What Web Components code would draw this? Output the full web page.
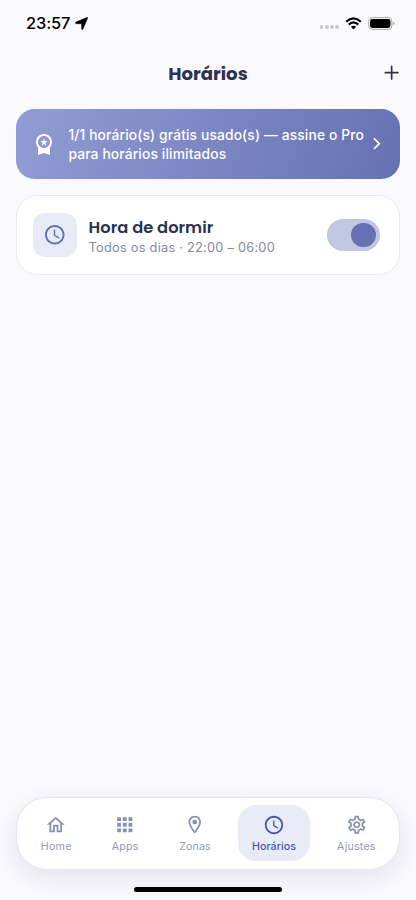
<!DOCTYPE html>
<html lang="pt-BR"><head><meta charset="utf-8"><title>Horários</title>
<style>
html,body{margin:0;height:100%}
body{background:#fafafd;font-family:Inter,"Liberation Sans",sans-serif;color:#2d3250;overflow:hidden}
</style></head><body>
<app-screen>
<status-bar></status-bar>
<title-bar>Horários</title-bar>
<promo-banner>1/1 horário(s) grátis usado(s) — assine o Pro<br>para horários ilimitados</promo-banner>
<schedule-card><span slot="name">Hora de dormir</span><span slot="time">Todos os dias · 22:00 – 06:00</span></schedule-card>
<nav-bar>
<nav-item icon="home" style="--w:58px;--ls:.2px">Home</nav-item>
<nav-item icon="apps" style="--w:54px;--ls:.15px">Apps</nav-item>
<nav-item icon="pin" style="--w:60px;--ls:.1px">Zonas</nav-item>
<nav-item icon="clock" active style="--w:72px;--ls:.02px">Horários</nav-item>
<nav-item icon="gear" style="--w:67px;--ls:.2px">Ajustes</nav-item>
</nav-bar>
<home-indicator></home-indicator>
</app-screen>
<script>
const ICONS={
home:'<path d="M12 5.69l5 4.5V18.500h-2v-6.500H9v6.500H7v-8.300l5-4.500M12 3L2 12h3v8.500h6v-6.500h2v6.500h6V12h3L12 3z"/>',
apps:'<path d="M3.500 3.500h4.300v4.300H3.500zM9.850 3.500h4.300v4.300h-4.300zM16.200 3.500h4.300v4.300h-4.300zM3.500 9.850h4.300v4.300H3.500zM9.850 9.850h4.300v4.300h-4.300zM16.200 9.850h4.300v4.300h-4.300zM3.500 16.200h4.300v4.300H3.500zM9.850 16.200h4.300v4.300H9.850zM16.200 16.200h4.300v4.300h-4.300z"/>',
pin:'<path d="M12 2C8.130 2 5 5.130 5 9c0 5.250 7 13 7 13s7-7.750 7-13c0-3.870-3.130-7-7-7zM7 9c0-2.760 2.240-5 5-5s5 2.240 5 5c0 2.880-2.880 7.190-5 9.880C9.920 16.210 7 11.850 7 9z"/><circle cx="12" cy="9" r="2.700"/>',
clock:'<path d="M11.990 2C6.470 2 2 6.480 2 12s4.470 10 9.990 10C17.520 22 22 17.520 22 12S17.520 2 11.990 2zM12 20c-4.420 0-8-3.580-8-8s3.580-8 8-8 8 3.580 8 8-3.580 8-8 8zm.5-13H11v6l5.250 3.150.75-1.230-4.500-2.670z"/>',
gear:'<path d="M19.43 12.98c.04-.32.07-.64.07-.98 0-.34-.03-.66-.07-.98l2.110-1.650c.19-.15.24-.42.12-.64l-2-3.460c-.09-.16-.26-.25-.44-.25-.06 0-.12.010-.17.030l-2.490 1c-.52-.4-1.080-.73-1.690-.98l-.38-2.650C14.460 2.180 14.250 2 14 2h-4c-.25 0-.46.18-.49.42l-.38 2.650c-.61.25-1.170.59-1.690.98l-2.490-1c-.06-.02-.12-.03-.18-.03-.17 0-.34.09-.43.25l-2 3.460c-.13.22-.07.49.12.64l2.110 1.650c-.04.32-.07.65-.07.98 0 .33.03.66.07.98l-2.110 1.650c-.19.15-.24.42-.12.64l2 3.460c.09.16.26.25.44.25.06 0 .12-.01.17-.03l2.490-1c.52.4 1.080.73 1.690.98l.38 2.650c.03.24.24.42.49.42h4c.25 0 .46-.18.49-.42l.38-2.650c.61-.25 1.170-.59 1.690-.98l2.490 1c.06.02.12.03.18.03.17 0 .34-.09.43-.25l2-3.460c.12-.22.07-.49-.12-.64l-2.110-1.650zm-1.980-1.710c.04.31.05.52.05.73 0 .21-.02.43-.05.73l-.14 1.130.89.7 1.080.84-.7 1.210-1.270-.51-1.040-.42-.9.68c-.43.32-.84.56-1.250.73l-1.060.43-.16 1.130-.2 1.350h-1.400l-.19-1.350-.16-1.130-1.060-.43c-.43-.18-.83-.41-1.230-.71l-.91-.7-1.060.43-1.270.51-.7-1.210 1.080-.84.89-.7-.14-1.130c-.03-.31-.05-.54-.05-.74s.02-.43.05-.73l.14-1.130-.89-.7-1.080-.84.7-1.210 1.270.51 1.040.42.9-.68c.43-.32.84-.56 1.250-.73l1.060-.43.16-1.130.2-1.350h1.390l.19 1.350.16 1.130 1.060.43c.43.18.83.41 1.230.71l.91.7 1.060-.43 1.270-.51.7 1.210-1.070.85-.89.7.14 1.130zM12 8c-2.210 0-4 1.790-4 4s1.790 4 4 4 4-1.790 4-4-1.790-4-4-4zm0 6c-1.100 0-2-.9-2-2s.9-2 2-2 2 .9 2 2-.9 2-2 2z"/>',
award:'<path d="M9.680 13.690L12 11.930l2.310 1.760-.88-2.850L15.750 9h-2.840L12 6.190 11.090 9H8.250l2.310 1.840-.88 2.850zM20 10c0-4.420-3.580-8-8-8s-8 3.580-8 8c0 2.030.76 3.870 2 5.280V23l6-2 6 2v-7.720c1.240-1.410 2-3.250 2-5.280zm-8-6c3.310 0 6 2.690 6 6s-2.690 6-6 6-6-2.690-6-6 2.690-6 6-6z"/>',
plus:'<path d="M12 4.900v14.200M4.900 12h14.200" fill="none" stroke="currentColor" stroke-width="1.900" stroke-linecap="round"/>',
chevron:'<path d="M9 6l6 6-6 6" fill="none" stroke="currentColor" stroke-width="1.900"/>'
};
const define=(name,css,html)=>customElements.define(name,class extends HTMLElement{
 constructor(){super();this.attachShadow({mode:'open'}).innerHTML=`<style>:host{display:block;box-sizing:border-box}*{box-sizing:border-box}${css}</style>${typeof html==='function'?html(this):html}`}
});
define('ui-icon',':host{width:var(--size,21.3px);height:var(--size,21.3px);flex:none}svg{display:block;width:100%;height:100%;fill:currentColor}',e=>`<svg viewBox="0 0 24 24">${ICONS[e.getAttribute('name')]}</svg>`);
define('app-screen',':host{height:100vh;display:flex;flex-direction:column}','<slot></slot>');
define('status-bar',`:host{height:46px;display:flex;align-items:center;padding:0 21px 0 26px;color:#000;flex:none}
 .time{font-size:16.400px;font-weight:530;line-height:20px;letter-spacing:-.1px;width:44px;white-space:nowrap}
 .loc{width:13px;height:13px;margin-left:5px}.right{margin-left:auto;display:flex;align-items:center}
 .dots{display:flex;gap:1.300px;margin:8px 6px 0 0}.dots i{width:3.900px;height:3.900px;border-radius:50%;background:#c9c9cc}svg{display:block}`,
 `<span class="time">23:57</span><svg class="loc" viewBox="0 0 13 13"><path d="M11.700.5Q13.100 0 12.600 1.300L8 12Q7.300 13.400 6.600 11.900V6.700H1.200Q-.5 6 .9 5z" stroke="#000" stroke-width=".5"/></svg>
 <div class="right"><div class="dots"><i></i><i></i><i></i><i></i></div>
 <svg width="17" height="13" viewBox="0 0 17 13"><g fill="none" stroke="#000" stroke-width="2.200"><path d="M1.200 4.700Q8.500-1.900 15.800 4.700M3.700 7.600Q8.500 3.200 13.300 7.600"/></g><path d="M8.500 12.500L5.900 9.800Q8.500 7.700 11.100 9.800z"/></svg>
 <svg style="margin-left:6px" width="27" height="13" viewBox="0 0 27 13"><rect x=".6" y=".6" width="23.300" height="11.800" rx="3.700" fill="none" stroke="#aaaaac"/><rect x="2" y="2" width="20.500" height="9" rx="2.400"/><path d="M25.100 4.500q2.600 2 0 4z" fill="#aaa"/></svg></div>`);
define('title-bar',`:host{height:63px;display:grid;grid-template-columns:1fr auto 1fr;align-items:center;padding:0 14px;flex:none}
 .t{font-family:Poppins,Inter,sans-serif;font-size:18.100px;font-weight:700;line-height:26px;padding-bottom:8px}ui-icon{--size:21.300px;justify-self:end;margin-bottom:9px}`,
 '<span></span><span class="t"><slot></slot></span><ui-icon name="plus"></ui-icon>');
define('promo-banner',`:host{height:70px;flex:none;margin:0 16.400px;border-radius:18.500px;background:linear-gradient(110deg,#929cd5,#6571b1);display:flex;align-items:center;color:#fff;padding:0 12px 0 16px}
 .text{font-size:13.800px;font-weight:460;line-height:19.200px;margin:2px 0 0 12px;flex:1;white-space:nowrap;letter-spacing:.14px}ui-icon{--size:24px}.c{--size:21.300px}`,
 '<ui-icon name="award"></ui-icon><span class="text"><slot></slot></span><ui-icon class="c" name="chevron"></ui-icon>');
define('schedule-card',`:host{height:80px;flex:none;margin:16px 16.400px 0;border:1px solid #e8e8f4;border-radius:21.500px;background:#fff;display:flex;align-items:center;padding:0 19px 0 15.200px}
 .box{width:44px;height:44px;border-radius:12px;background:#e8ebf5;display:grid;place-items:center;color:#6571b7}ui-icon{--size:23.500px}
 .info{margin:3px 0 0 12px;flex:1;display:flex;flex-direction:column;white-space:nowrap}.n{font:600 16.300px/21px Poppins,Inter,sans-serif}.s{font-size:12.800px;line-height:19px;color:#858ba2;letter-spacing:.24px}
 .switch{width:52.500px;height:32px;border-radius:16px;background:#c1c6e1;display:flex;align-items:center;justify-content:flex-end;padding:0 4px}.switch i{width:24.500px;height:24.500px;border-radius:50%;background:#6571b3}`,
 '<div class="box"><ui-icon name="clock"></ui-icon></div><div class="info"><span class="n"><slot name="name"></slot></span><span class="s"><slot name="time"></slot></span></div><div class="switch"><i></i></div>');
define('nav-bar',`:host{margin:auto 16.400px 0;height:72.500px;flex:none;border:1px solid #e6e4f4;border-radius:31px;background:#fff;box-shadow:0 8px 26px rgba(30,30,40,.10);display:flex;align-items:center;justify-content:space-between;padding:0 8.700px 0 9.800px}`,'<slot></slot>');
define('nav-item',`:host{width:var(--w);height:56px;display:flex;flex-direction:column;align-items:center;padding-top:8.500px;gap:3.500px;color:#9499af;border-radius:18px}
 :host([active]){background:#e8ebf5;color:#4a58a9}:host([active]) span{font-weight:500}ui-icon{color:#8993ae;--size:21.500px}:host([active]) ui-icon{color:inherit;--size:22px}
 span{font-size:10.700px;font-weight:400;line-height:15px;letter-spacing:var(--ls);white-space:nowrap}`,
 e=>`<ui-icon name="${e.getAttribute('icon')}"></ui-icon><span><slot></slot></span>`);
define('home-indicator',':host{width:148px;height:5px;border-radius:3px;background:#000;margin:17px auto 8.500px;flex:none}','');
</script></body></html>
